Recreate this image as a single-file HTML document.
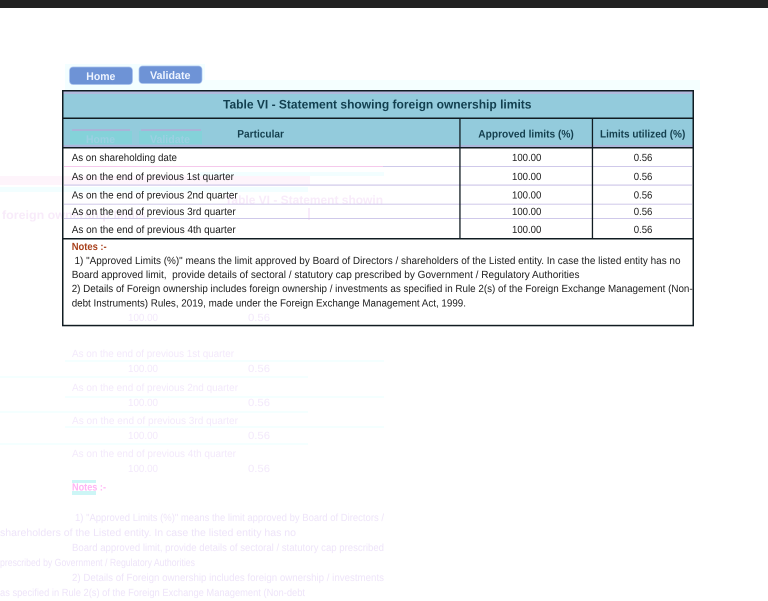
<!DOCTYPE html>
<html lang="en">
<head>
<meta charset="utf-8">
<title>Table VI - Statement showing foreign ownership limits</title>
<style>
html,body{margin:0;padding:0;width:768px;height:601px;overflow:hidden;background:#fff}
svg{display:block;position:absolute;left:0;top:0;filter:blur(0.25px)}
text{font-family:"Liberation Sans",sans-serif;text-rendering:geometricPrecision}
.b{font-size:10.4px;fill:#1d1d1d}
.h{font-size:10.8px;font-weight:bold;fill:#143f4e}
.g{font-size:10.4px;fill:#f3e9fb}
.g2{font-size:10.4px;fill:#eee4f9}
.t{font-size:12px;font-weight:bold;fill:#f8ebfa}
</style>
</head>
<body>
<svg width="768" height="601" viewBox="0 0 768 601" xmlns="http://www.w3.org/2000/svg">
  <rect x="0" y="0" width="768" height="8" fill="#222222"/>

  <!-- faint ghost bands -->
  <rect x="65" y="64" width="140" height="26" fill="#f3feff"/>
  <rect x="200" y="80" width="500" height="10" fill="#f5ffff"/>
  <rect x="200" y="172" width="184" height="4" fill="#f2feff"/>
  <rect x="0" y="176" width="310" height="9" fill="#fef4fb"/>
  <rect x="0" y="187" width="308" height="5" fill="#f2feff"/>

  <!-- ghost text beside and behind rows -->
  <text class="t" x="225" y="204" textLength="158" lengthAdjust="spacingAndGlyphs">Table VI - Statement showin</text>
  <text class="t" x="2" y="219" textLength="144" lengthAdjust="spacingAndGlyphs">foreign ownership limits</text>
  <rect x="308" y="208" width="2" height="12" fill="#f8ebfb"/>

  <!-- table headers -->
  <rect x="63" y="91" width="630" height="27" fill="#93cbdc"/>
  <rect x="63" y="91" width="630" height="3" fill="#b1b9dc"/>
  <rect x="63" y="119" width="630" height="28" fill="#93cbdc"/>
  <rect x="63" y="145" width="630" height="2" fill="#adb6da"/>
  <rect x="70" y="131" width="62" height="13" fill="#84d2d9"/>
  <rect x="139" y="131" width="63" height="13" fill="#84d2d9"/>
  <rect x="72" y="129" width="58" height="2" fill="#a9b4d8"/>
  <rect x="141" y="129" width="60" height="2" fill="#a9b4d8"/>
  <text x="86" y="143" font-size="11" font-weight="bold" fill="#9cd0e2" textLength="29" lengthAdjust="spacingAndGlyphs">Home</text>
  <text x="150" y="143" font-size="11" font-weight="bold" fill="#9cd0e2" textLength="40" lengthAdjust="spacingAndGlyphs">Validate</text>

  <!-- row separators -->
  <g fill="#cfc9ea">
    <rect x="64" y="166" width="319" height="1" fill="#f5c9ec"/>
    <rect x="383" y="166" width="309" height="1"/>
    <rect x="64" y="184.500" width="628" height="1.200"/>
    <rect x="64" y="203.700" width="628" height="1"/>
    <rect x="64" y="218" width="628" height="1"/>
  </g>

  <!-- table lines -->
  <g fill="#111c22">
    <rect x="62" y="90" width="632" height="1.500"/>
    <rect x="62" y="117.500" width="632" height="1.500"/>
    <rect x="62" y="147" width="632" height="1.500"/>
    <rect x="62" y="238" width="632" height="1.500"/>
    <rect x="62" y="324.800" width="632" height="1.500"/>
    <rect x="62" y="90" width="1.500" height="236"/>
    <rect x="692.500" y="90" width="1.500" height="236"/>
    <rect x="459.300" y="118" width="1.300" height="121"/>
    <rect x="591.800" y="118" width="1.300" height="121"/>
  </g>

  <!-- buttons -->
  <rect x="69.500" y="67" width="63" height="17.500" rx="3.500" fill="#6e93d6" stroke="#a9c2ee" stroke-width="0.700"/>
  <rect x="139" y="66" width="63" height="17.500" rx="3.500" fill="#6e93d6" stroke="#a9c2ee" stroke-width="0.700"/>
  <text x="86.300" y="80" font-size="11" font-weight="bold" fill="#eef4ff" textLength="29" lengthAdjust="spacingAndGlyphs">Home</text>
  <text x="150" y="79" font-size="11" font-weight="bold" fill="#eef4ff" textLength="40.500" lengthAdjust="spacingAndGlyphs">Validate</text>

  <!-- header text -->
  <text x="223" y="108.400" font-size="12.400" font-weight="bold" fill="#123f4f" textLength="308.500" lengthAdjust="spacingAndGlyphs">Table VI - Statement showing foreign ownership limits</text>
  <text class="h" x="237.300" y="137.300" textLength="46.700" lengthAdjust="spacingAndGlyphs">Particular</text>
  <text class="h" x="478.300" y="137.300" textLength="95.500" lengthAdjust="spacingAndGlyphs">Approved limits (%)</text>
  <text class="h" x="600" y="137.300" textLength="85.300" lengthAdjust="spacingAndGlyphs">Limits utilized (%)</text>

  <!-- rows -->
  <text class="b" x="71.700" y="161.200" textLength="105.300" lengthAdjust="spacingAndGlyphs">As on shareholding date</text>
  <text class="b" x="71.700" y="180" textLength="162.300" lengthAdjust="spacingAndGlyphs">As on the end of previous 1st quarter</text>
  <text class="b" x="71.700" y="198.600" textLength="166" lengthAdjust="spacingAndGlyphs">As on the end of previous 2nd quarter</text>
  <text class="b" x="71.700" y="215" textLength="164" lengthAdjust="spacingAndGlyphs">As on the end of previous 3rd quarter</text>
  <text class="b" x="71.700" y="232.800" textLength="164" lengthAdjust="spacingAndGlyphs">As on the end of previous 4th quarter</text>

  <g>
    <text class="b" x="512" y="161.200" textLength="29.300" lengthAdjust="spacingAndGlyphs">100.00</text>
    <text class="b" x="512" y="180" textLength="29.300" lengthAdjust="spacingAndGlyphs">100.00</text>
    <text class="b" x="512" y="198.600" textLength="29.300" lengthAdjust="spacingAndGlyphs">100.00</text>
    <text class="b" x="512" y="215" textLength="29.300" lengthAdjust="spacingAndGlyphs">100.00</text>
    <text class="b" x="512" y="232.800" textLength="29.300" lengthAdjust="spacingAndGlyphs">100.00</text>
    <text class="b" x="633.700" y="161.200" textLength="18.700" lengthAdjust="spacingAndGlyphs">0.56</text>
    <text class="b" x="633.700" y="180" textLength="18.700" lengthAdjust="spacingAndGlyphs">0.56</text>
    <text class="b" x="633.700" y="198.600" textLength="18.700" lengthAdjust="spacingAndGlyphs">0.56</text>
    <text class="b" x="633.700" y="215" textLength="18.700" lengthAdjust="spacingAndGlyphs">0.56</text>
    <text class="b" x="633.700" y="232.800" textLength="18.700" lengthAdjust="spacingAndGlyphs">0.56</text>
  </g>

  <!-- notes -->
  <text x="71.700" y="250" font-size="10.400" font-weight="bold" fill="#a8401c" textLength="35" lengthAdjust="spacingAndGlyphs">Notes :-</text>
  <text class="b" x="74.500" y="264" textLength="606" lengthAdjust="spacingAndGlyphs">1) "Approved Limits (%)" means the limit approved by Board of Directors / shareholders of the Listed entity. In case the listed entity has no</text>
  <text class="b" x="71.700" y="278" textLength="507.800" lengthAdjust="spacingAndGlyphs" xml:space="preserve">Board approved limit,  provide details of sectoral / statutory cap prescribed by Government / Regulatory Authorities</text>
  <text class="b" x="71.700" y="292" textLength="621" lengthAdjust="spacingAndGlyphs">2) Details of Foreign ownership includes foreign ownership / investments as specified in Rule 2(s) of the Foreign Exchange Management (Non-</text>
  <text class="b" x="71.700" y="306.500" textLength="394.300" lengthAdjust="spacingAndGlyphs">debt Instruments) Rules, 2019, made under the Foreign Exchange Management Act, 1999.</text>

  <!-- ghost content below table -->
  <g>
    <text class="g" x="128" y="321" textLength="30" lengthAdjust="spacingAndGlyphs">100.00</text>
    <text class="g" x="248" y="321" textLength="22" lengthAdjust="spacingAndGlyphs">0.56</text>
    <rect x="65" y="360" width="319" height="2" fill="#f4ffff"/>
    <rect x="0" y="376" width="308" height="2" fill="#f4ffff"/>
    <rect x="65" y="396" width="319" height="2" fill="#f4ffff"/>
    <rect x="0" y="411" width="308" height="2" fill="#f4ffff"/>
    <rect x="65" y="426" width="319" height="2" fill="#f4ffff"/>
    <rect x="0" y="443" width="308" height="2" fill="#f4ffff"/>

    <text class="g" x="72" y="357" textLength="162" lengthAdjust="spacingAndGlyphs">As on the end of previous 1st quarter</text>
    <text class="g" x="128" y="372" textLength="30" lengthAdjust="spacingAndGlyphs">100.00</text>
    <text class="g" x="248" y="372" textLength="22" lengthAdjust="spacingAndGlyphs">0.56</text>
    <text class="g" x="72" y="391" textLength="166" lengthAdjust="spacingAndGlyphs">As on the end of previous 2nd quarter</text>
    <text class="g" x="128" y="406" textLength="30" lengthAdjust="spacingAndGlyphs">100.00</text>
    <text class="g" x="248" y="406" textLength="22" lengthAdjust="spacingAndGlyphs">0.56</text>
    <text class="g" x="72" y="424" textLength="166" lengthAdjust="spacingAndGlyphs">As on the end of previous 3rd quarter</text>
    <text class="g" x="128" y="439" textLength="30" lengthAdjust="spacingAndGlyphs">100.00</text>
    <text class="g" x="248" y="439" textLength="22" lengthAdjust="spacingAndGlyphs">0.56</text>
    <text class="g" x="72" y="457" textLength="164" lengthAdjust="spacingAndGlyphs">As on the end of previous 4th quarter</text>
    <text class="g" x="128" y="472" textLength="30" lengthAdjust="spacingAndGlyphs">100.00</text>
    <text class="g" x="248" y="472" textLength="22" lengthAdjust="spacingAndGlyphs">0.56</text>

    <rect x="72" y="480" width="24" height="3" fill="#cdf6f6"/>
    <rect x="72" y="491" width="24" height="4" fill="#cdf6f6"/>
    <text x="72" y="490.500" font-size="10.400" font-weight="bold" fill="#ffb4f4" textLength="34" lengthAdjust="spacingAndGlyphs">Notes :-</text>

    <text class="g2" x="75" y="521" textLength="309" lengthAdjust="spacingAndGlyphs">1) "Approved Limits (%)" means the limit approved by Board of Directors /</text>
    <text class="g2" x="0" y="536" textLength="296" lengthAdjust="spacingAndGlyphs">shareholders of the Listed entity. In case the listed entity has no</text>
    <text class="g2" x="72" y="551" textLength="312" lengthAdjust="spacingAndGlyphs">Board approved limit, provide details of sectoral / statutory cap prescribed</text>
    <text class="g2" x="0" y="566" textLength="195" lengthAdjust="spacingAndGlyphs">prescribed by Government / Regulatory Authorities</text>
    <text class="g2" x="72" y="581" textLength="312" lengthAdjust="spacingAndGlyphs">2) Details of Foreign ownership includes foreign ownership / investments</text>
    <text class="g2" x="0" y="596" textLength="305" lengthAdjust="spacingAndGlyphs">as specified in Rule 2(s) of the Foreign Exchange Management (Non-debt</text>
  </g>
</svg>
</body>
</html>
